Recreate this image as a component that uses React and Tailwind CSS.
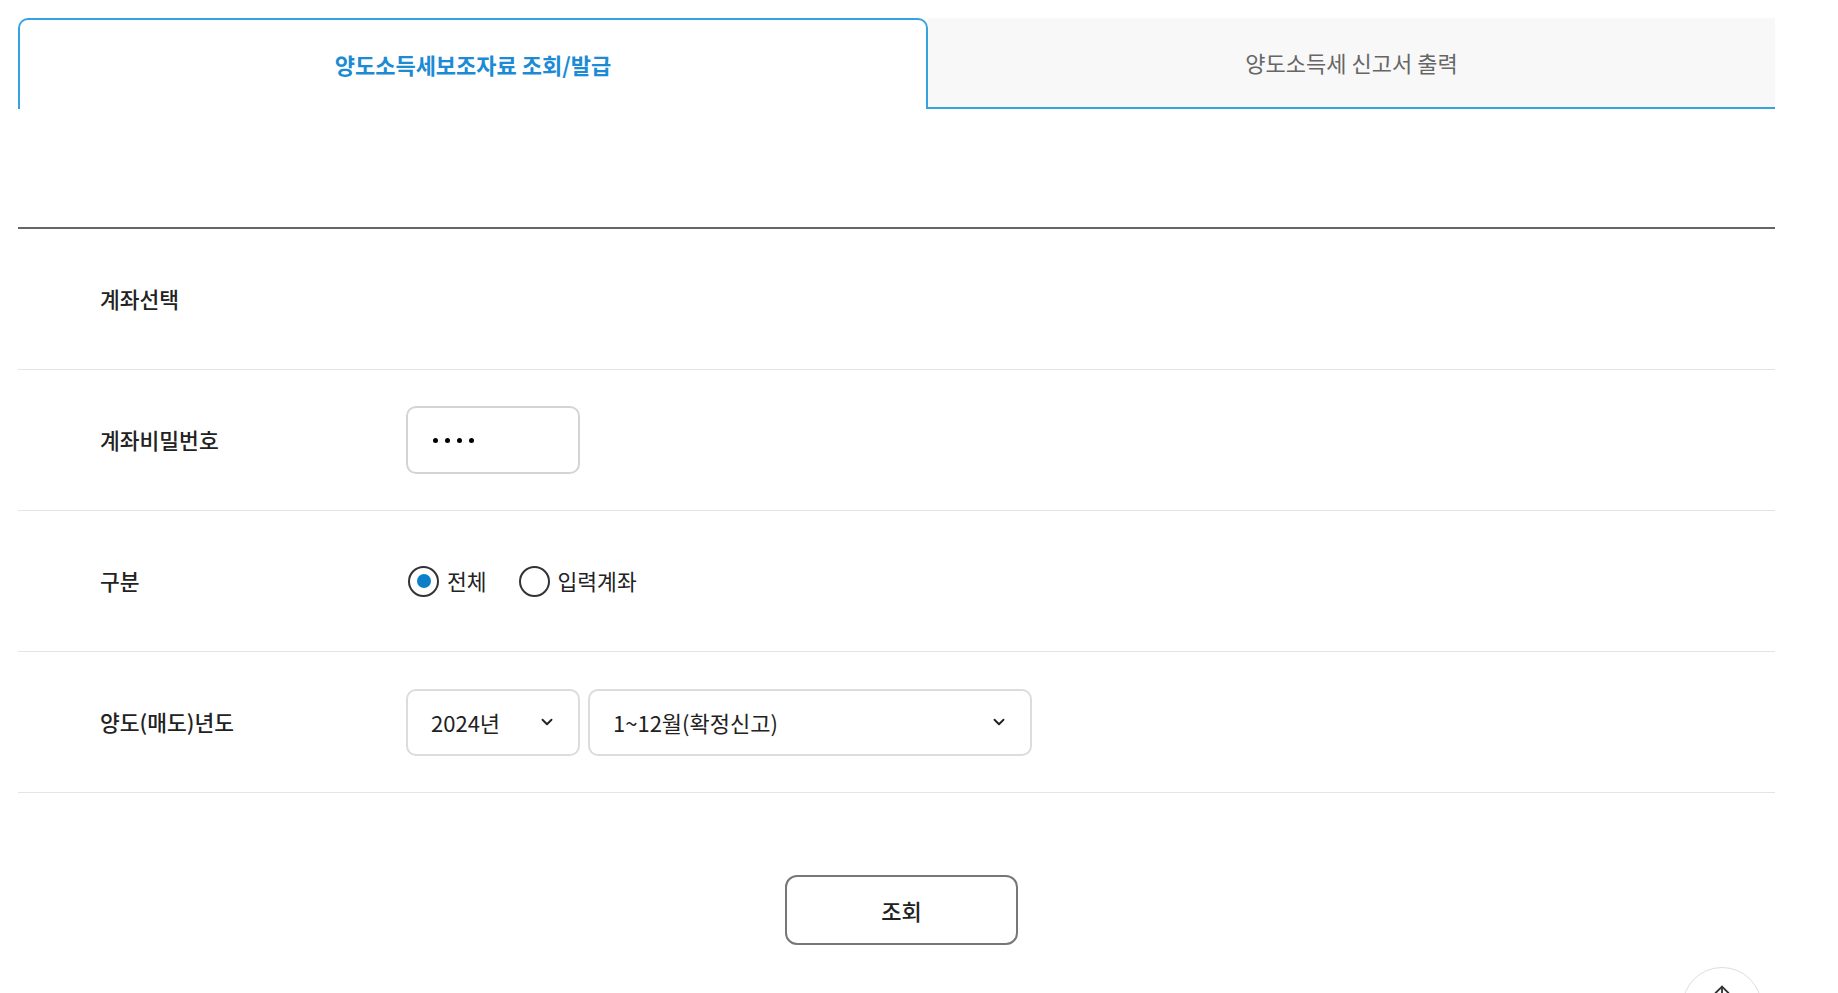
import React, { useState } from 'react';
import { ChevronDown, ArrowUp } from 'lucide-react';

const font = { fontFamily: '"Noto Sans CJK KR", "Noto Sans", sans-serif' };

function Row({ label, children }) {
    return (
        <div className="flex items-center h-[141px] border-b border-[#e4e4e4]">
            <div className="w-[388px] pl-[82px] text-[21.5px] font-medium text-[#222]">{label}</div>
            <div className="flex items-center">{children}</div>
        </div>
    );
}

function Radio({ checked, label, onClick }) {
    return (
        <button onClick={onClick} className="flex items-center gap-[8px]">
            <span className="w-[31px] h-[31px] rounded-full border-2 border-[#333] flex items-center justify-center bg-white">
                {checked && <span className="w-[14px] h-[14px] rounded-full bg-[#0b7fc7]" />}
            </span>
            <span className="text-[21.5px] text-[#222]">{label}</span>
        </button>
    );
}

export default function App() {
    const [tab, setTab] = useState(0);
    const [kind, setKind] = useState('all');

    return (
        <div className="relative min-h-[993px] bg-white" style={font}>
            <div className="ml-[18px] pt-[18px] w-[1757px]">
                {/* Tabs */}
                <div className="flex h-[91px]">
                    <button
                        onClick={() => setTab(0)}
                        className="w-[910px] border-2 border-b-0 border-[#36a2e0] rounded-t-[10px] bg-white text-[22px] font-bold text-[#1b8bd4]"
                    >
                        양도소득세보조자료 조회/발급
                    </button>
                    <button
                        onClick={() => setTab(1)}
                        className="flex-1 bg-[#f8f8f8] border-b-2 border-[#36a2e0] text-[22px] text-[#666]"
                    >
                        양도소득세 신고서 출력
                    </button>
                </div>

                {/* Form */}
                <div className="mt-[118px] border-t-2 border-[#666]">
                    <Row label="계좌선택" />
                    <Row label="계좌비밀번호">
                        <div className="w-[174px] h-[68px] border-2 border-[#d4d4d8] rounded-[10px] flex items-center gap-[7px] pl-[25px]">
                            <span className="w-[5px] h-[5px] rounded-full bg-black" />
                            <span className="w-[5px] h-[5px] rounded-full bg-black" />
                            <span className="w-[5px] h-[5px] rounded-full bg-black" />
                            <span className="w-[5px] h-[5px] rounded-full bg-black" />
                        </div>
                    </Row>
                    <Row label="구분">
                        <div className="flex items-center gap-[32px] pl-[2px]">
                            <Radio checked={kind === 'all'} label="전체" onClick={() => setKind('all')} />
                            <Radio checked={kind === 'input'} label="입력계좌" onClick={() => setKind('input')} />
                        </div>
                    </Row>
                    <Row label="양도(매도)년도">
                        <div className="flex gap-[8px]">
                            <div className="w-[174px] h-[67px] border-2 border-[#dcdcdc] rounded-[10px] flex items-center justify-between pl-[23px] pr-[22px]">
                                <span className="text-[22px] text-[#222]">2024년</span>
                                <ChevronDown className="w-[18px] h-[18px] text-[#222]" strokeWidth={2.5} />
                            </div>
                            <div className="w-[444px] h-[67px] border-2 border-[#dcdcdc] rounded-[10px] flex items-center justify-between pl-[23px] pr-[22px]">
                                <span className="text-[22px] text-[#222]">1~12월(확정신고)</span>
                                <ChevronDown className="w-[18px] h-[18px] text-[#222]" strokeWidth={2.5} />
                            </div>
                        </div>
                    </Row>
                </div>

                {/* Submit */}
                <div className="flex justify-center pl-[10px] mt-[82px]">
                    <button className="w-[233px] h-[70px] border-2 border-[#777] rounded-[12px] bg-white text-[22px] font-medium text-[#222]">
                        조회
                    </button>
                </div>
            </div>

            {/* Scroll to top */}
            <button className="absolute left-[1682px] top-[967px] w-[80px] h-[80px] rounded-full border border-[#ddd] bg-white flex justify-center pt-[14px]">
                <ArrowUp className="w-[22px] h-[22px] text-[#333]" strokeWidth={2} />
            </button>
        </div>
    );
}
